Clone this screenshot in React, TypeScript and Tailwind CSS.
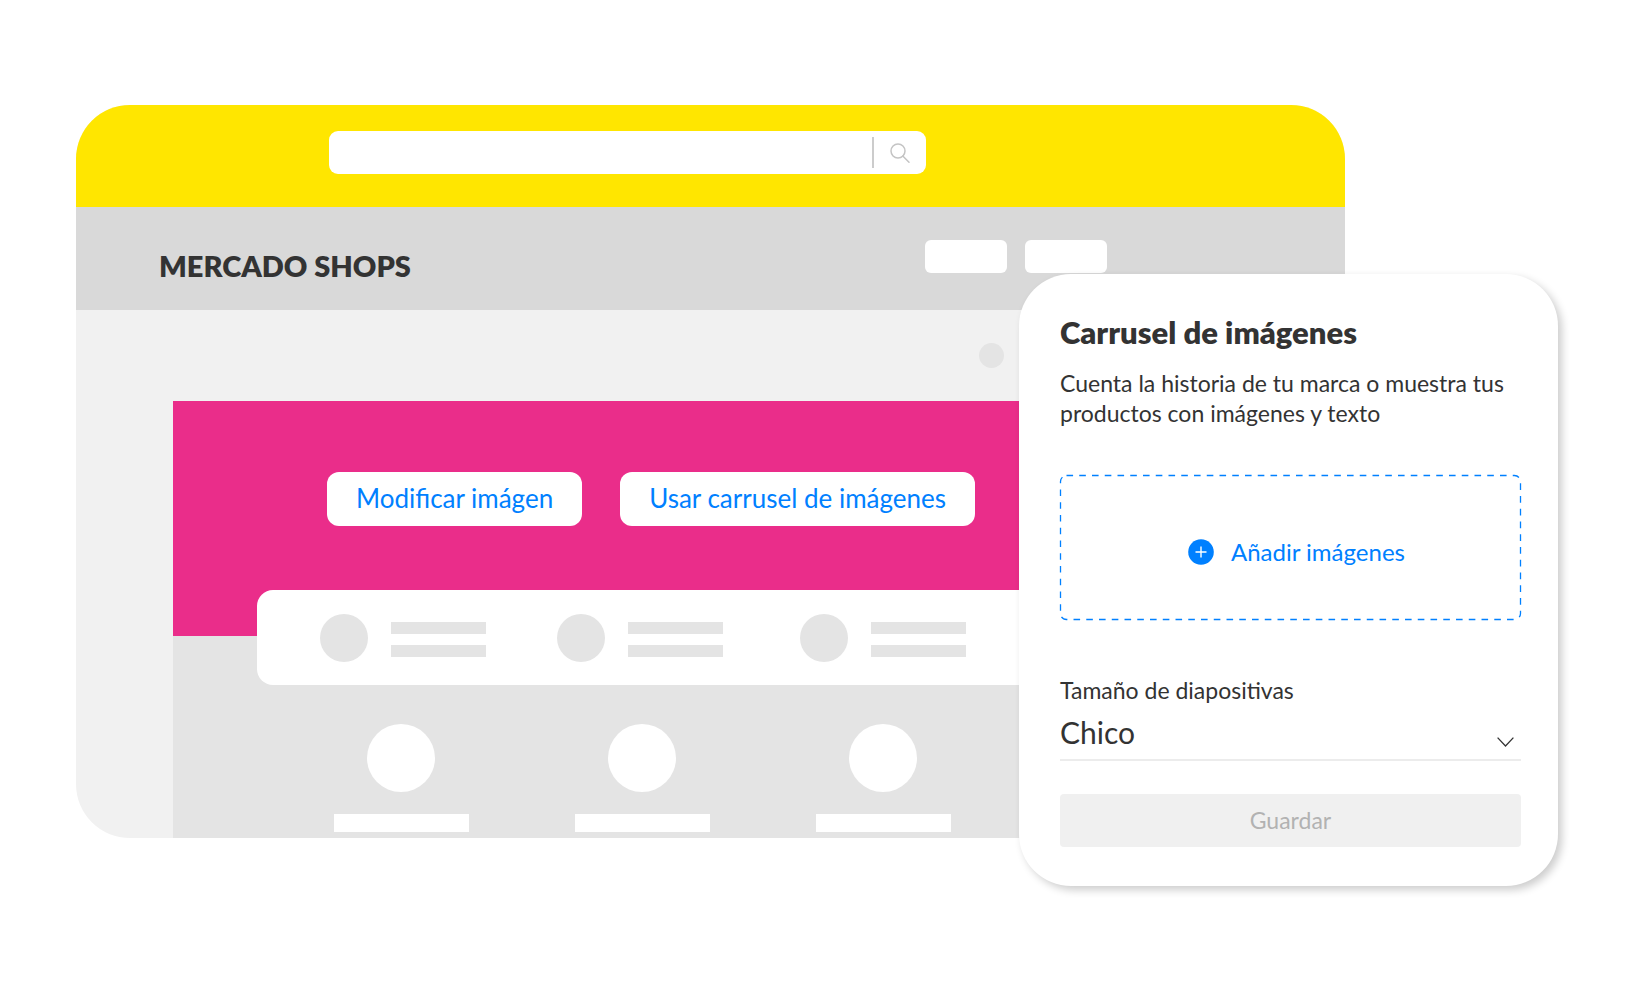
import { useState } from 'react'

const benefits = [1, 2, 3]
const categories = [1, 2, 3]
const sizes = ['Chico', 'Mediano', 'Grande']

function StorePreview() {
  return (
    <section className="ml-[76px] mr-[289px] rounded-[54px] overflow-hidden bg-[#f1f1f1]">
      {/* Search bar */}
      <div className="h-[102px] pt-[26px] bg-[#ffe600]">
        <form className="flex items-center ml-[253px] w-[597px] h-[43px] bg-white rounded-[9px]">
          <input
            type="text"
            aria-label="Buscar"
            className="flex-1 min-w-0 h-full px-4 bg-transparent text-lg text-[#333333] outline-none"
          />
          <span className="w-[2px] h-[31px] bg-[#cccccc]" />
          <button
            type="button"
            aria-label="Buscar"
            className="w-[52px] h-full flex items-center justify-center cursor-pointer"
          >
            <svg width="20" height="20" viewBox="0 0 20 20" fill="none" stroke="#c4c4c4" strokeWidth="1.5">
              <circle cx="8" cy="8" r="7" />
              <path d="M12.8 13L19 19.2" strokeLinecap="round" />
            </svg>
          </button>
        </form>
      </div>

      {/* Store header */}
      <header className="flex items-start justify-between h-[103px] pl-[83px] pr-[238px] bg-[#d9d9d9]">
        <h1 className="mt-[41px] text-[29px] leading-[36px] font-extrabold text-[#333333]">
          MERCADO SHOPS
        </h1>
        <div className="flex gap-[18px] mt-[33px]">
          <div className="w-[82px] h-[33px] bg-white rounded-md" />
          <div className="w-[82px] h-[33px] bg-white rounded-md" />
        </div>
      </header>

      <div className="flex justify-end h-[91px] pt-[33px] pr-[341px]">
        <div className="size-[25px] rounded-full bg-[#e4e4e4]" />
      </div>

      {/* Banner and content */}
      <div className="mx-[97px] bg-[#e4e4e4]">
        <div className="flex items-start gap-[38px] h-[235px] pt-[71px] pl-[154px] bg-[#ea2d8a]">
          <button className="h-[54px] px-[29px] pb-0.5 bg-white text-[#0080ff] text-[26px] leading-[30px] whitespace-nowrap rounded-xl cursor-pointer">
            Modificar imágen
          </button>
          <button className="h-[54px] px-[29px] pb-0.5 bg-white text-[#0080ff] text-[26px] leading-[30px] whitespace-nowrap rounded-xl cursor-pointer">
            Usar carrusel de imágenes
          </button>
        </div>

        <div className="grid grid-cols-[237px_243px_1fr] items-center h-[95px] -mt-[46px] ml-[84px] pl-[63px] bg-white rounded-l-2xl">
          {benefits.map((id) => (
            <div key={id} className="flex items-center gap-[23px]">
              <div className="size-12 rounded-full bg-[#e4e4e4]" />
              <div className="flex flex-col gap-[11px] pt-[3px]">
                <div className="w-[95px] h-3 bg-[#e4e4e4]" />
                <div className="w-[95px] h-3 bg-[#e4e4e4]" />
              </div>
            </div>
          ))}
        </div>

        <div className="flex gap-[106px] pt-[39px] pb-1.5 pl-[161px]">
          {categories.map((id) => (
            <div key={id} className="flex flex-col items-center gap-[22px]">
              <div className="size-[68px] mr-0.5 rounded-full bg-white" />
              <div className="w-[135px] h-[18px] bg-white" />
            </div>
          ))}
        </div>
      </div>
    </section>
  )
}

function CarouselPanel() {
  const [size, setSize] = useState('Chico')

  return (
    <aside className="absolute top-[274px] right-[76px] w-[539px] pt-10 pb-[39px] pl-[41px] pr-[37px] bg-white rounded-[52px] shadow-[4px_4px_8px_rgba(0,0,0,0.2)]">
      <h2 className="text-[31px] leading-[36px] font-extrabold">Carrusel de imágenes</h2>
      <p className="mt-[18px] text-[23px] leading-[30px]">
        Cuenta la historia de tu marca o muestra tus productos con imágenes y texto
      </p>

      <button className="relative flex items-center justify-center gap-[17px] w-full h-[145px] mt-[47px] pt-2 pl-3 text-[#0080ff] text-[24px] leading-[30px] cursor-pointer">
        <svg className="absolute inset-0 size-full overflow-visible" fill="none">
          <rect
            x="0.5"
            y="0.5"
            width="460"
            height="144"
            rx="6"
            stroke="#0080ff"
            strokeWidth="1.3"
            strokeDasharray="6.6 6.15"
          />
        </svg>
        <svg width="26" height="26" viewBox="0 0 26 26">
          <circle cx="13" cy="13" r="12.8" fill="#0080ff" />
          <path d="M13 7.5V18.5M7.5 13H18.5" stroke="white" strokeWidth="1.4" />
        </svg>
        Añadir imágenes
      </button>

      <label htmlFor="slide-size" className="block mt-[55px] text-[23px] leading-[30px]">
        Tamaño de diapositivas
      </label>
      <div className="relative mt-[9px]">
        <select
          id="slide-size"
          value={size}
          onChange={(e) => setSize(e.target.value)}
          className="block w-full h-[47px] pb-[9px] appearance-none bg-transparent border-b-2 border-[#ececec] text-[30px] leading-[36px] outline-none cursor-pointer"
        >
          {sizes.map((s) => (
            <option key={s} value={s}>
              {s}
            </option>
          ))}
        </select>
        <svg
          className="absolute right-[7px] bottom-[14px] pointer-events-none"
          width="17"
          height="10"
          viewBox="0 0 17 10"
          fill="none"
          stroke="#333333"
          strokeWidth="1.3"
        >
          <path d="M0.6 0.6L8.5 9L16.4 0.6" />
        </svg>
      </div>

      <button
        disabled
        className="block w-full h-[53px] mt-[33px] pb-0.5 bg-[#f0f0f0] text-[#b2b2b2] text-[23px] leading-[30px] rounded"
      >
        Guardar
      </button>
    </aside>
  )
}

export default function App() {
  return (
    <main className="relative min-h-screen pt-[105px] pb-[104px] bg-white text-[#333333] font-['Lato',sans-serif]">
      <StorePreview />
      <CarouselPanel />
    </main>
  )
}
